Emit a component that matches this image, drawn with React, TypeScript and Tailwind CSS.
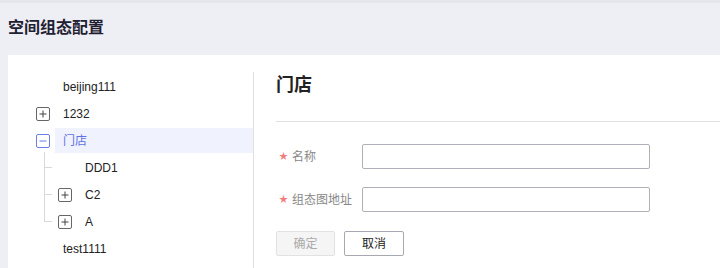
const FONT = "font-['Liberation_Sans','Noto_Sans_CJK_SC',sans-serif]";

function PlusBox({ minus, active }: { minus?: boolean; active?: boolean }) {
  return (
    <span
      className={`flex h-[14px] w-[14px] items-center justify-center rounded-[2px] border ${
        active ? "border-[#6b7de8]" : "border-[#666]"
      } bg-white`}
    >
      <svg width="10" height="10" viewBox="0 0 10 10">
        <path d="M1.5 5h7" stroke={active ? "#6b7de8" : "#444"} strokeWidth="1" />
        {!minus && <path d="M5 1.5v7" stroke="#444" strokeWidth="1" />}
      </svg>
    </span>
  );
}

export default function App() {
  return (
    <div className={`h-[268px] w-[720px] overflow-hidden bg-[#eeeff4] ${FONT}`}>
      <div className="h-[3px] bg-[#e5e6eb]" />
      <h1 className="pl-[8px] pt-[14px] text-[16px] font-bold leading-[22px] text-[#1f2133]">
        空间组态配置
      </h1>
      <div className="ml-[8px] mt-[16px] flex h-[220px] bg-white">
        {/* tree */}
        <div className="w-[245px] pt-[18px] text-[12px] text-[#222]">
          <div className="flex h-[27px] items-center pl-[55px]">beijing111</div>
          <div className="flex h-[27px] items-center pl-[28px]">
            <PlusBox />
            <span className="ml-[13px]">1232</span>
          </div>
          <div className="flex h-[27px] items-center pl-[28px]">
            <PlusBox minus active />
            <span className="ml-[5px] flex h-[25px] flex-1 items-center bg-[#f0f3fd] pl-[8px] text-[#5f72e6]">
              门店
            </span>
          </div>
          <div className="relative">
            <div className="absolute left-[36px] top-[-2px] h-[69px] w-px bg-[#d9d9d9]" />
            <div className="flex h-[27px] items-center pl-[77px]">
              <span className="absolute left-[36px] h-px w-[8px] bg-[#d9d9d9]" />
              DDD1
            </div>
            <div className="flex h-[27px] items-center pl-[50px]">
              <span className="absolute left-[36px] h-px w-[8px] bg-[#d9d9d9]" />
              <PlusBox />
              <span className="ml-[13px]">C2</span>
            </div>
            <div className="flex h-[27px] items-center pl-[50px]">
              <span className="absolute left-[36px] h-px w-[8px] bg-[#d9d9d9]" />
              <PlusBox />
              <span className="ml-[13px]">A</span>
            </div>
          </div>
          <div className="flex h-[27px] items-center pl-[55px]">test1111</div>
        </div>
        {/* divider */}
        <div className="mt-[17px] w-px bg-[#e0e0e0]" />
        {/* form */}
        <div className="flex-1 pl-[22px] pt-[17px]">
          <h2 className="text-[18px] font-bold leading-[26px] text-[#222]">门店</h2>
          <div className="mt-[23px] h-px bg-[#e0e0e0]" />
          <div className="mt-[22px] flex items-center">
            <label className="flex w-[86px] items-center pl-[3px] text-[12px] text-[#888]">
              <span className="mr-[4px] text-[9px] text-[#f27d7d]">★</span>名称
            </label>
            <input className="h-[25px] w-[288px] rounded-[2px] border border-[#b0b0b8] outline-none" />
          </div>
          <div className="mt-[18px] flex items-center">
            <label className="flex w-[86px] items-center pl-[3px] text-[12px] text-[#888]">
              <span className="mr-[4px] text-[9px] text-[#f27d7d]">★</span>组态图地址
            </label>
            <input className="h-[25px] w-[288px] rounded-[2px] border border-[#b0b0b8] outline-none" />
          </div>
          <div className="mt-[19px] flex gap-[9px]">
            <button className="h-[25px] w-[59px] rounded-[2px] border border-[#e2e2e2] bg-[#f5f5f5] text-[12px] text-[#aaa]">
              确定
            </button>
            <button className="h-[25px] w-[60px] rounded-[2px] border border-[#a8a8b0] bg-white text-[12px] text-[#222]">
              取消
            </button>
          </div>
        </div>
      </div>
    </div>
  );
}
